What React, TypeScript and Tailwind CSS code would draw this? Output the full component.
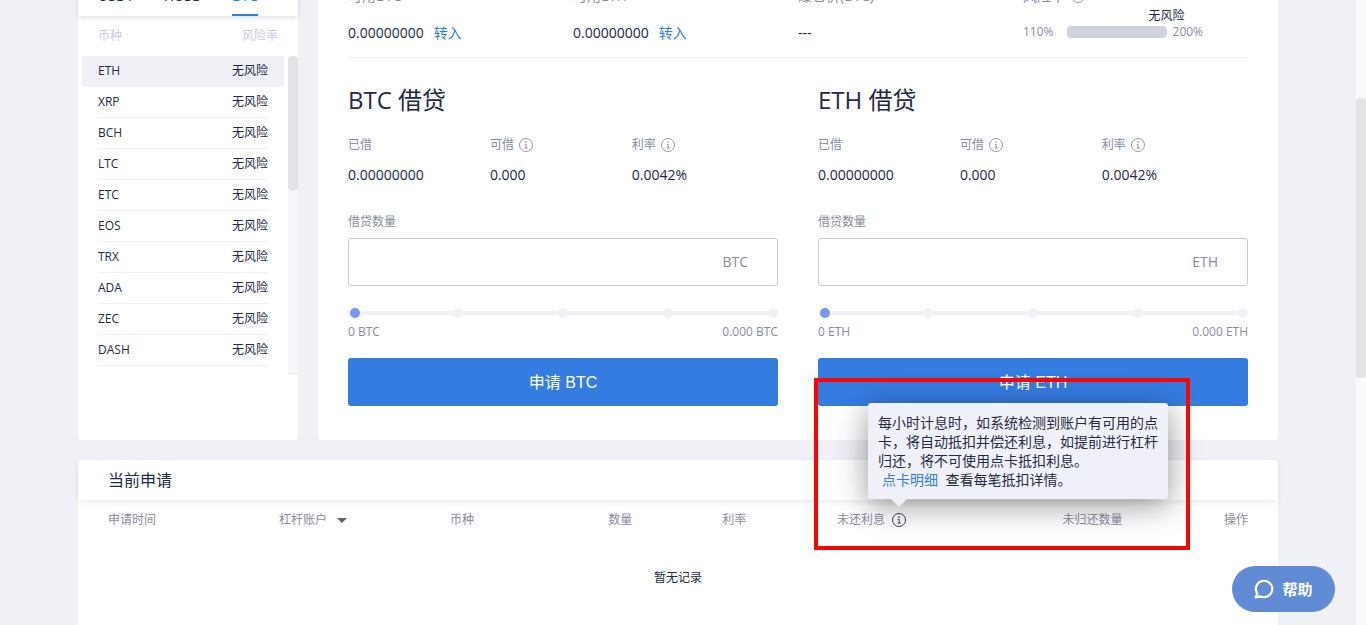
import React, { useState } from 'react';

const coins = ['ETH', 'XRP', 'BCH', 'LTC', 'ETC', 'EOS', 'TRX', 'ADA', 'ZEC', 'DASH'];

function InfoIcon() {
  return (
    <svg viewBox="0 0 14 14" className="block size-[14px] shrink-0" fill="none" stroke="currentColor" aria-hidden="true">
      <circle cx="7" cy="7" r="6.5" strokeWidth="0.9" />
      <circle cx="7" cy="4.1" r="0.8" fill="currentColor" stroke="none" />
      <path d="M5.7 6.4H7.2V10M5.6 10.1H8.6" strokeWidth="0.9" />
    </svg>
  );
}

function Sidebar() {
  return (
    <aside className="flex w-[220px] shrink-0 flex-col rounded-b-sm bg-white">
      <nav className="relative flex h-10 gap-[30px] px-5 text-sm leading-10 shadow-[0_2px_6px_rgba(30,33,57,0.14)]">
        <a href="#usdt">USDT</a>
        <a href="#husd">HUSD</a>
        <a href="#btc" className="border-b-2 border-[#357ce1] text-[#357ce1]">BTC</a>
      </nav>
      <div className="flex h-10 items-center justify-between px-5 text-xs text-[#c9cbd8]">
        <span>币种</span>
        <span>风险率</span>
      </div>
      <div className="flex h-[318px]">
        <ul className="flex-1 px-1">
          {coins.map((coin, i) => (
            <li key={coin} className={i === 0 ? 'rounded-b bg-[#f0f1f7] px-4' : 'px-4'}>
              <a
                href={'#' + coin}
                className="flex h-[31px] items-center justify-between border-b border-[#f0f1f7] text-xs"
              >
                <span>{coin}</span>
                <span>无风险</span>
              </a>
            </li>
          ))}
        </ul>
        <div className="w-[10px] border-b border-[#e8e8e8] bg-[#f7f7f7]">
          <div className="h-[135px] rounded bg-[#e4e4e5]" />
        </div>
      </div>
    </aside>
  );
}

function Balance({ label, children }: { label: string; children: React.ReactNode }) {
  return (
    <div className="w-1/4">
      <div className="h-5 text-sm leading-5 text-[#8a8d9e]">{label}</div>
      <div className="mt-[15px] flex gap-[10px] text-sm leading-6">{children}</div>
    </div>
  );
}

function Summary() {
  return (
    <div className="flex h-[82px] border-b border-[#f0f1f7] pt-[10px]">
      <Balance label="可用BTC">
        <span>0.00000000</span>
        <a href="#transfer-btc" className="text-[#357ce1]">转入</a>
      </Balance>
      <Balance label="可用ETH">
        <span>0.00000000</span>
        <a href="#transfer-eth" className="text-[#357ce1]">转入</a>
      </Balance>
      <Balance label="爆仓价(BTC)">
        <span>---</span>
      </Balance>
      <div className="w-1/4 text-[#8a8d9e]">
        <div className="flex h-5 items-center gap-1.5 text-sm leading-5">
          风险率
          <InfoIcon />
        </div>
        <div className="mt-4 flex h-5 items-center text-xs">
          <span>110%</span>
          <div className="relative ml-[13px] mr-1.5 h-3 w-[100px] rounded bg-[#d0d2df]">
            <span className="absolute bottom-full left-full -translate-x-1/2 whitespace-nowrap pb-0.5 text-[#252a44]">无风险</span>
          </div>
          <span>200%</span>
        </div>
      </div>
    </div>
  );
}

function Stat({ label, value, info }: { label: string; value: string; info?: boolean }) {
  return (
    <div className="w-[33%]">
      <dt className="flex h-5 items-center gap-[5px] text-xs text-[#8a8d9e]">
        {label}
        {info && <InfoIcon />}
      </dt>
      <dd className="mt-2.5 text-sm leading-5">{value}</dd>
    </div>
  );
}

function LoanForm({ coin }: { coin: string }) {
  const [share, setShare] = useState(0);
  return (
    <form className="flex-1" onSubmit={(e) => e.preventDefault()}>
      <h2 className="text-2xl leading-8">{coin} 借贷</h2>
      <dl className="mt-[19px] flex">
        <Stat label="已借" value="0.00000000" />
        <Stat label="可借" value="0.000" info />
        <Stat label="利率" value="0.0042%" info />
      </dl>
      <label htmlFor={'amount-' + coin} className="mt-[27px] block text-xs leading-5 text-[#8a8d9e]">
        借贷数量
      </label>
      <div className="mt-1.5 flex h-12 items-center rounded-[3px] border border-[#cbccd8] pr-[29px]">
        <input id={'amount-' + coin} type="text" className="h-full min-w-0 flex-1 bg-transparent px-4 text-sm outline-none" />
        <span className="text-sm text-[#8a8d9e]">{coin}</span>
      </div>
      <div className="relative mt-5 flex h-[14px] items-center">
        <div className="mx-1 h-1 flex-1 bg-[#f0f1f7]" />
        <div className="absolute inset-0 flex items-center justify-between">
          {[0, 1, 2, 3, 4].map((n) => (
            <span key={n} className="size-[10px] rounded-full bg-[#f0f1f7]" />
          ))}
        </div>
        <input
          type="range"
          min={0}
          max={100}
          value={share}
          onChange={(e) => setShare(Number(e.target.value))}
          aria-label={coin + ' 借贷数量'}
          className="absolute inset-0 h-[14px] w-full cursor-pointer appearance-none bg-transparent outline-none [&::-webkit-slider-thumb]:size-[14px] [&::-webkit-slider-thumb]:appearance-none [&::-webkit-slider-thumb]:rounded-full [&::-webkit-slider-thumb]:border-2 [&::-webkit-slider-thumb]:border-[#f4f6fd] [&::-webkit-slider-thumb]:bg-[#7896ee]"
        />
      </div>
      <div className="mt-0.5 flex justify-between text-xs leading-5 text-[#8a8d9e]">
        <span>0 {coin}</span>
        <span>0.000 {coin}</span>
      </div>
      <button
        type="submit"
        className="mt-4 block h-12 w-full rounded-[3px] bg-[#357ce1] pt-0.5 font-['Liberation_Sans','Noto_Sans_CJK_SC',sans-serif] text-base text-white"
      >
        申请 {coin}
      </button>
    </form>
  );
}

function InterestTip() {
  return (
    <span className="relative text-[#252a44]">
      <InfoIcon />
      <span
        role="tooltip"
        className="absolute bottom-full -left-6 z-10 mb-[14px] w-[300px] rounded-[3px] bg-[#f0f1f8] p-2.5 text-left text-sm leading-[19px] shadow-[0_6px_32px_rgba(0,0,0,0.42)]"
      >
        每小时计息时，如系统检测到账户有可用的点卡，将自动抵扣并偿还利息，如提前进行杠杆归还，将不可使用点卡抵扣利息。
        <br />
        <a href="#points" className="mx-1 text-[#357ce1]">点卡明细</a> 查看每笔抵扣详情。
        <span className="absolute left-[23px] top-full border-x-8 border-t-8 border-x-transparent border-t-[#f0f1f8]" />
        <span className="pointer-events-none absolute -bottom-[51px] -left-[54px] -right-[22px] -top-[25px] border-4 border-[#fa0505]" />
      </span>
    </span>
  );
}

function Applications() {
  return (
    <section className="mt-5 flex-1 rounded-t-sm bg-white">
      <h3 className="h-10 px-[30px] text-base leading-10 shadow-[0_2px_6px_rgba(30,33,57,0.09)]">当前申请</h3>
      <div className="px-[30px]">
        <table className="w-full table-fixed text-xs">
          <thead>
            <tr className="h-10 text-right text-[#8a8d9e] *:font-normal">
              <th className="w-[15%] text-left">申请时间</th>
              <th className="w-[15%] text-left">
                <button type="button" className="flex items-center gap-2.5">
                  杠杆账户
                  <span className="border-x-5 border-t-5 border-x-transparent border-t-[#5d6080]" />
                </button>
              </th>
              <th className="w-[8%] text-left">币种</th>
              <th className="w-[8%]">数量</th>
              <th className="w-[10%]">利率</th>
              <th className="w-[14%]">
                <div className="flex items-center justify-end gap-[7px]">
                  未还利息
                  <InterestTip />
                </div>
              </th>
              <th className="w-[19%]">未归还数量</th>
              <th className="w-[11%]">操作</th>
            </tr>
          </thead>
          <tbody>
            <tr>
              <td colSpan={8} className="h-[76px] text-center">暂无记录</td>
            </tr>
          </tbody>
        </table>
      </div>
    </section>
  );
}

export default function App() {
  return (
    <div className="flex h-screen overflow-hidden bg-[#f0f1f7] font-['Open_Sans','Noto_Sans_CJK_SC',sans-serif] text-[#252a44]">
      <main className="mx-auto -mt-6 flex max-w-[1200px] flex-1 flex-col">
        <div className="flex gap-5">
          <Sidebar />
          <section className="min-w-0 flex-1 rounded-b-sm bg-white px-[30px] pb-[34px]">
            <Summary />
            <div className="mt-[26px] flex gap-10">
              <LoanForm coin="BTC" />
              <LoanForm coin="ETH" />
            </div>
          </section>
        </div>
        <Applications />
      </main>
      <div className="w-[10px] shrink-0 bg-[#fafafa] pt-[98px]">
        <div className="h-[280px] rounded bg-[#e3e3e5]" />
      </div>
      <button
        type="button"
        className="fixed bottom-[13px] right-[31px] z-20 flex h-[46px] w-[103px] items-center justify-center gap-2 rounded-full bg-[#628bd5] text-[15px] font-bold text-white"
      >
        <svg viewBox="0 0 20 20" className="size-5" fill="none" stroke="currentColor" strokeWidth="2.2" strokeLinejoin="round" aria-hidden="true">
          <path d="M1.6 18.4L3.3 14.6A8.2 8.2 0 1 1 6.6 17.4Z" />
        </svg>
        帮助
      </button>
    </div>
  );
}
